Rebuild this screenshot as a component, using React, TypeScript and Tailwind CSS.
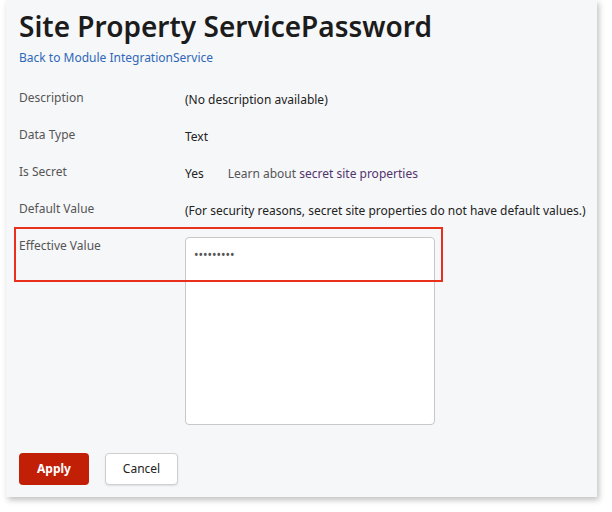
const rows = [
  { label: "Description", value: "(No description available)" },
  { label: "Data Type", value: "Text" },
];

export default function App() {
  return (
    <div className="w-[612px] h-[512px] bg-white pl-[6px] pr-[15px] pb-[15px]" style={{ fontFamily: '"Noto Sans", "Open Sans", sans-serif' }}>
      <div className="h-[497px] bg-[#f6f7f9] shadow-[2px_3px_6px_rgba(0,0,0,0.25)] pl-[13px] pt-[6px]">
        <h1 className="text-[28px] leading-[40px] font-semibold text-[#1c1c1c]">Site Property ServicePassword</h1>
        <a className="block mt-[3px] text-[12px] leading-[18px] text-[#2f68b8]">Back to Module IntegrationService</a>

        <div className="mt-[22px] flex flex-col text-[12px] leading-[18px]">
          {rows.map((r) => (
            <div key={r.label} className="flex h-[37px]">
              <div className="w-[166px] shrink-0 text-[#555]">{r.label}</div>
              <div className="pt-[2px] text-[#222]">{r.value}</div>
            </div>
          ))}
          <div className="flex h-[37px]">
            <div className="w-[166px] shrink-0 text-[#555]">Is Secret</div>
            <div className="pt-[2px] text-[#222] flex gap-[24px]">
              <span>Yes</span>
              <span className="text-[#555]">
                Learn about <a className="text-[#52336e]">secret site properties</a>
              </span>
            </div>
          </div>
          <div className="flex h-[26px]">
            <div className="w-[166px] shrink-0 text-[#555]">Default Value</div>
            <div className="pt-[2px] text-[#222] whitespace-nowrap">
              (For security reasons, secret site properties do not have default values.)
            </div>
          </div>
          <div className="relative flex">
            <div className="absolute left-[-5px] top-[1px] w-[429px] h-[55px] border-2 border-[#e8301c]" />
            <div className="w-[166px] shrink-0 pt-[11px] text-[#555]">Effective Value</div>
            <div className="mt-[11px] w-[250px] h-[188px] bg-white border border-[#c8c8c8] rounded-[4px] px-[8px] pt-[8px] text-[#555] text-[12px]">
              •••••••••
            </div>
          </div>
        </div>

        <div className="mt-[28px] flex gap-[16px]">
          <button className="w-[70px] h-[32px] rounded-[4px] bg-[#c21f07] text-white text-[12px] font-bold">Apply</button>
          <button className="w-[73px] h-[32px] rounded-[4px] bg-white border border-[#cfcfcf] text-[#222] text-[12px] shadow-[0_1px_2px_rgba(0,0,0,0.1)]">Cancel</button>
        </div>
      </div>
    </div>
  );
}
